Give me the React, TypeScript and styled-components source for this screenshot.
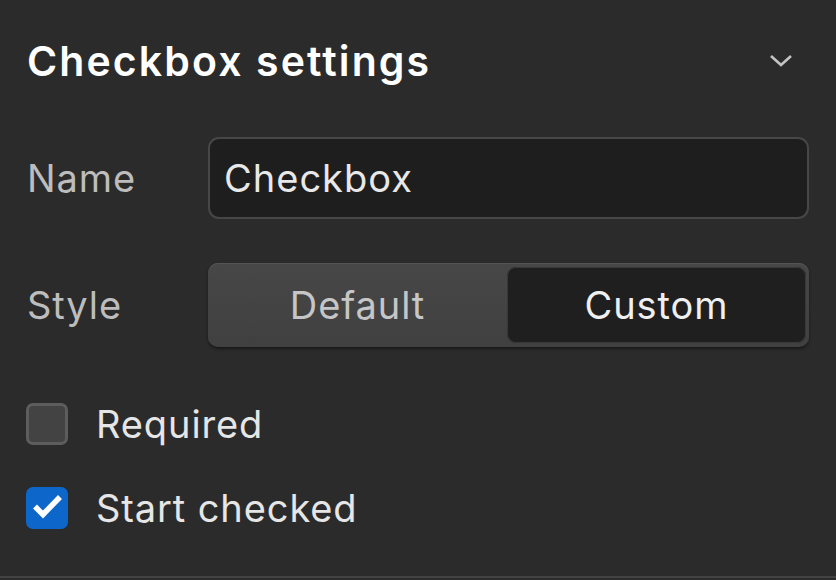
import styled, { createGlobalStyle } from 'styled-components';

const GlobalStyle = createGlobalStyle`
  html, body {
    margin: 0;
    padding: 0;
    background: #2b2b2b;
  }
  body {
    font-family: Inter, 'Noto Sans', sans-serif;
  }
`;

const App = () => {
  return (
    <>
      <GlobalStyle />
      <Panel>
        <Header>
          <Title>Checkbox settings</Title>
          <Chevron width="24" height="14" viewBox="0 0 24 14">
            <path d="M2 2 L12 11 L22 2" fill="none" stroke="#c4c4c4" strokeWidth="2.6" />
          </Chevron>
        </Header>
        <Form>
          <FieldRow>
            <Label>Name</Label>
            <TextInput>Checkbox</TextInput>
          </FieldRow>
          <FieldRow>
            <Label>Style</Label>
            <Segmented>
              <Segment>Default</Segment>
              <Segment $active>Custom</Segment>
            </Segmented>
          </FieldRow>
        </Form>
        <CheckList>
          <CheckRow>
            <Box />
            <CheckLabel>Required</CheckLabel>
          </CheckRow>
          <CheckRow>
            <Box $checked>
              <svg width="42" height="42" viewBox="0 0 42 42">
                <path d="M9 19.5 L17 27.5 L34 10" fill="none" stroke="#fff" strokeWidth="5.5" />
              </svg>
            </Box>
            <CheckLabel>Start checked</CheckLabel>
          </CheckRow>
        </CheckList>
      </Panel>
    </>
  );
};

const Panel = styled.div`
  width: 836px;
  height: 578px;
  box-sizing: border-box;
  padding: 0 27px;
  background: #2b2b2b;
  border-bottom: 2px solid #434343;
  display: flex;
  flex-direction: column;
`;

const Header = styled.div`
  height: 122px;
  display: flex;
  align-items: center;
  justify-content: space-between;
`;

const Title = styled.h1`
  margin: 0;
  font-size: 41px;
  font-weight: 600;
  color: #ffffff;
  letter-spacing: 2.1px;
`;

const Chevron = styled.svg`
  margin-right: 16px;
`;

const Form = styled.div`
  padding-top: 15px;
  display: flex;
  flex-direction: column;
  gap: 44px;
`;

const FieldRow = styled.div`
  display: grid;
  grid-template-columns: 181px 1fr;
  align-items: center;
`;

const Label = styled.span`
  font-size: 38px;
  letter-spacing: 0.9px;
  color: #bdbdbd;
`;

const TextInput = styled.div`
  height: 82px;
  box-sizing: border-box;
  display: flex;
  align-items: center;
  padding: 0 14px;
  background: #1e1e1e;
  border: 2px solid #474747;
  border-radius: 11px;
  font-size: 38px;
  letter-spacing: 1px;
  color: #e8e8e8;
`;

const Segmented = styled.div`
  height: 84px;
  box-sizing: border-box;
  display: grid;
  grid-template-columns: 1fr 1fr;
  padding: 4px 3px 4px 0;
  background: linear-gradient(#474747, #404040);
  border-radius: 10px;
  box-shadow: inset 0 1px 0 #555, 0 2px 3px rgba(0, 0, 0, 0.45);
`;

const Segment = styled.div<{ $active?: boolean }>`
  display: flex;
  align-items: center;
  justify-content: center;
  font-size: 38px;
  letter-spacing: 0.9px;
  border-radius: 9px;
  color: ${({ $active }) => ($active ? '#efefef' : '#c6c6c6')};
  background: ${({ $active }) => ($active ? '#1f1f1f' : 'transparent')};
  box-shadow: ${({ $active }) => ($active ? 'inset 0 0 0 1px #383838' : 'none')};
`;

const CheckList = styled.div`
  margin-top: 56px;
  display: flex;
  flex-direction: column;
  gap: 42px;
`;

const CheckRow = styled.div`
  display: flex;
  align-items: center;
  gap: 28px;
  height: 42px;
`;

const Box = styled.div<{ $checked?: boolean }>`
  width: 42px;
  height: 42px;
  flex-shrink: 0;
  margin-left: -1px;
  box-sizing: border-box;
  border-radius: 7px;
  display: flex;
  align-items: center;
  justify-content: center;
  background: ${({ $checked }) => ($checked ? '#0d67cb' : '#434343')};
  border: ${({ $checked }) => ($checked ? 'none' : '3px solid #5d5d5d')};
`;

const CheckLabel = styled.span`
  font-size: 38px;
  line-height: 42px;
  letter-spacing: 0.9px;
  color: #e6e6e6;
`;

export default App;
